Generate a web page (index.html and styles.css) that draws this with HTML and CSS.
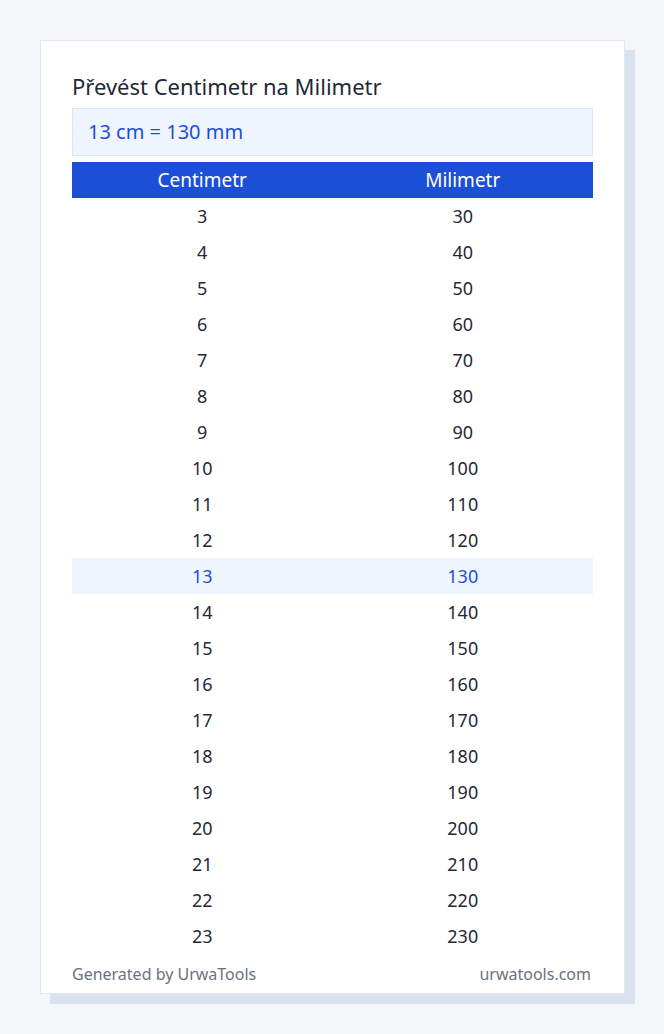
FILE: index.html
```html
<!DOCTYPE html>
<html lang="cs">
<head>
<meta charset="utf-8">
<title>Převést Centimetr na Milimetr</title>
<link rel="stylesheet" href="styles.css">
</head>
<body>
<div class="card">
  <h1 class="title">Převést Centimetr na Milimetr</h1>
  <div class="result">13 cm = 130 mm</div>
  <table class="conv">
    <thead>
      <tr><th>Centimetr</th><th>Milimetr</th></tr>
    </thead>
    <tbody>
      <tr><td>3</td><td>30</td></tr>
      <tr><td>4</td><td>40</td></tr>
      <tr><td>5</td><td>50</td></tr>
      <tr><td>6</td><td>60</td></tr>
      <tr><td>7</td><td>70</td></tr>
      <tr><td>8</td><td>80</td></tr>
      <tr><td>9</td><td>90</td></tr>
      <tr><td>10</td><td>100</td></tr>
      <tr><td>11</td><td>110</td></tr>
      <tr><td>12</td><td>120</td></tr>
      <tr class="active"><td>13</td><td>130</td></tr>
      <tr><td>14</td><td>140</td></tr>
      <tr><td>15</td><td>150</td></tr>
      <tr><td>16</td><td>160</td></tr>
      <tr><td>17</td><td>170</td></tr>
      <tr><td>18</td><td>180</td></tr>
      <tr><td>19</td><td>190</td></tr>
      <tr><td>20</td><td>200</td></tr>
      <tr><td>21</td><td>210</td></tr>
      <tr><td>22</td><td>220</td></tr>
      <tr><td>23</td><td>230</td></tr>
    </tbody>
  </table>
  <div class="footer">
    <span>Generated by UrwaTools</span>
    <span>urwatools.com</span>
  </div>
</div>
</body>
</html>
```

FILE: styles.css
```css
html, body {
  margin: 0;
  padding: 0;
}
body {
  background: #f5f6fa;
  font-family: "Noto Sans", "Open Sans", sans-serif;
  color: #1f2937;
  padding: 40px 0 0 40px;
  min-height: 1034px;
  box-sizing: border-box;
}
.card {
  width: 585px;
  height: 954px;
  box-sizing: border-box;
  background: #ffffff;
  border: 1px solid #dfe6f6;
  padding: 31px 31px 0 31px;
  box-shadow: 10px 10px 0 #dae2ef;
  display: flex;
  flex-direction: column;
}
.title {
  margin: 0 0 8px 0;
  font-size: 22px;
  line-height: 28px;
  font-weight: 400;
  color: #1f2937;
}
.result {
  height: 48px;
  box-sizing: border-box;
  background: #eef5ff;
  border: 1px solid #dbe7f8;
  color: #1d4ed8;
  font-size: 20px;
  line-height: 46px;
  padding-left: 15px;
  margin-bottom: 6px;
}
.conv {
  width: 100%;
  border-collapse: collapse;
  table-layout: fixed;
}
.conv th {
  background: #1c4fd7;
  color: #ffffff;
  font-weight: 400;
  font-size: 19px;
  height: 36px;
  padding: 0;
  text-align: center;
}
.conv td {
  height: 36px;
  padding: 0;
  text-align: center;
  font-size: 18px;
  color: #1f2937;
}
.conv tr.active td {
  background: #eef5ff;
  color: #1d4ed8;
}
.footer {
  display: flex;
  justify-content: space-between;
  margin-top: 10px;
  font-size: 16px;
  line-height: 20px;
  color: #6b7280;
  padding-right: 2px;
}
```
